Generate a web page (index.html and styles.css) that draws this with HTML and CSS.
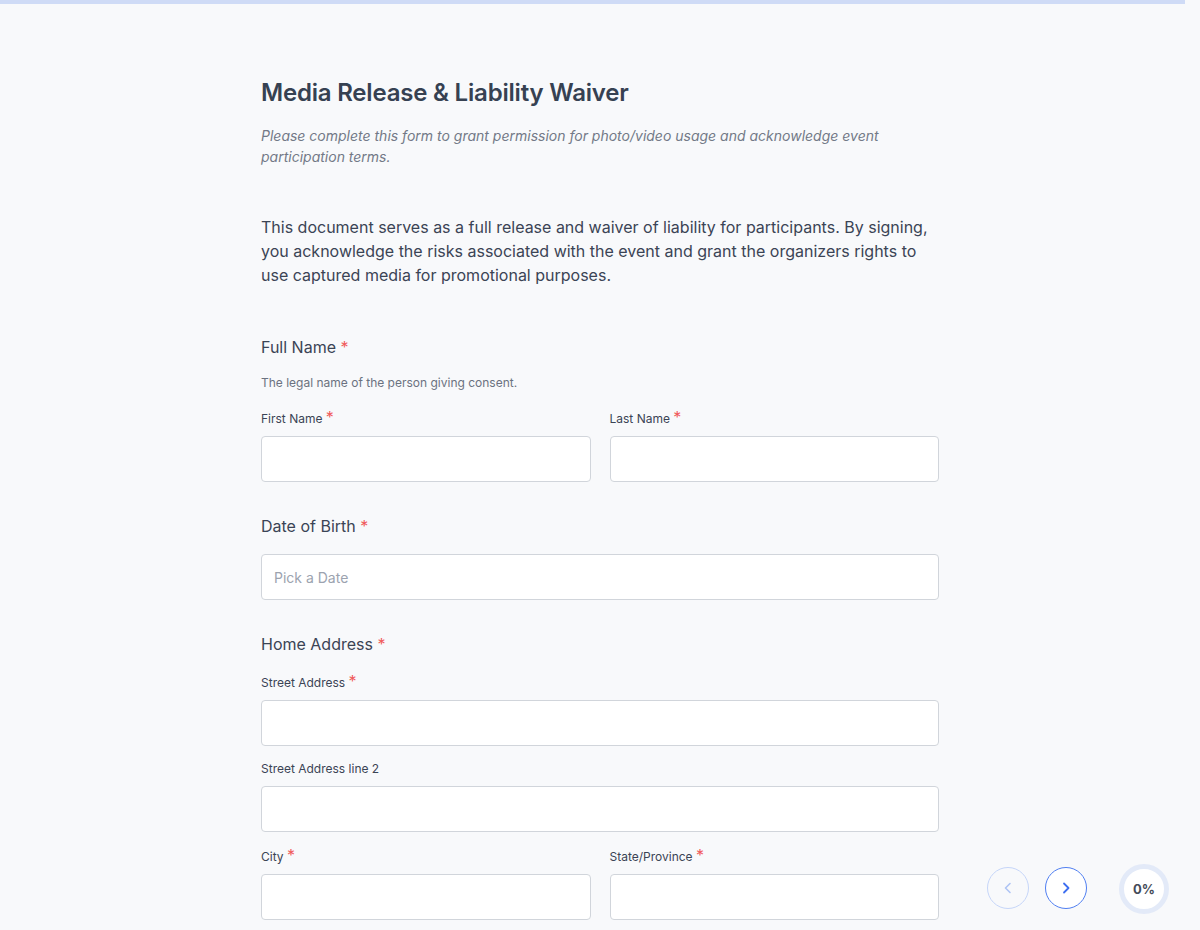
FILE: index.html
```html
<!DOCTYPE html>
<html lang="en">
<head>
  <meta charset="UTF-8">
  <title>Media Release &amp; Liability Waiver</title>
  <link rel="stylesheet" href="styles.css">
</head>
<body>
  <div class="top-progress"></div>

  <div class="form-wrap">
    <h1 class="form-title">Media Release &amp; Liability Waiver</h1>
    <p class="form-subtitle">Please complete this form to grant permission for photo/video usage and acknowledge event participation terms.</p>

    <p class="form-intro">This document serves as a full release and waiver of liability for participants. By signing, you acknowledge the risks associated with the event and grant the organizers rights to use captured media for promotional purposes.</p>

    <div class="question">
      <div class="question-label">Full Name <span class="req">*</span></div>
      <div class="question-help">The legal name of the person giving consent.</div>
      <div class="field-row">
        <div class="field">
          <label class="field-label">First Name <span class="req">*</span></label>
          <input type="text" class="text-input">
        </div>
        <div class="field">
          <label class="field-label">Last Name <span class="req">*</span></label>
          <input type="text" class="text-input">
        </div>
      </div>
    </div>

    <div class="question">
      <div class="question-label">Date of Birth <span class="req">*</span></div>
      <input type="text" class="text-input" placeholder="Pick a Date">
    </div>

    <div class="question">
      <div class="question-label">Home Address <span class="req">*</span></div>
      <div class="field">
        <label class="field-label">Street Address <span class="req">*</span></label>
        <input type="text" class="text-input">
      </div>
      <div class="field">
        <label class="field-label">Street Address line 2</label>
        <input type="text" class="text-input">
      </div>
      <div class="field-row">
        <div class="field">
          <label class="field-label">City <span class="req">*</span></label>
          <input type="text" class="text-input">
        </div>
        <div class="field">
          <label class="field-label">State/Province <span class="req">*</span></label>
          <input type="text" class="text-input">
        </div>
      </div>
    </div>
  </div>

  <div class="nav-buttons">
    <button class="nav-btn disabled" aria-label="Previous">
      <svg width="16" height="16" viewBox="0 0 16 16" fill="none" stroke="currentColor" stroke-width="1.6" stroke-linecap="round" stroke-linejoin="round"><path d="M10 3.5 5.5 8l4.5 4.5"/></svg>
    </button>
    <button class="nav-btn" aria-label="Next">
      <svg width="16" height="16" viewBox="0 0 16 16" fill="none" stroke="currentColor" stroke-width="1.8" stroke-linecap="round" stroke-linejoin="round"><path d="M6 3.5 10.5 8 6 12.5"/></svg>
    </button>
  </div>

  <div class="progress-ring">0%</div>
</body>
</html>
```

FILE: styles.css
```css
body {
  margin: 0;
  background-color: #f8f9fb;
  font-family: Inter, "Noto Sans", sans-serif;
  color: #3b4455;
}

.top-progress {
  height: 4px;
  width: 1185px;
  background-color: #cfdbf6;
}

.form-wrap {
  width: 678px;
  margin: 0 auto;
  padding: 72px 0 40px 0;
}

.form-title {
  margin: 0;
  font-size: 24px;
  font-weight: 600;
  line-height: 34px;
  color: #364152;
  letter-spacing: -0.2px;
}

.form-subtitle {
  margin: 15px 0 0 0;
  font-size: 14px;
  line-height: 21px;
  font-style: italic;
  color: #737987;
}

.form-intro {
  margin: 48px 0 0 0;
  font-size: 16px;
  line-height: 24px;
  color: #3b4455;
}

.question {
  display: flex;
  flex-direction: column;
  margin-top: 48px;
}

.question + .question {
  margin-top: 32px;
}

.question-label {
  font-size: 16px;
  line-height: 24px;
  color: #3b4455;
  margin-bottom: 16px;
}

.question-help {
  font-size: 12px;
  line-height: 16px;
  color: #6b7280;
  margin-bottom: 20px;
}

.req {
  color: #f05a5a;
}

.field-label .req {
  font-size: 16px;
  line-height: 0;
}

.field-row {
  display: flex;
  gap: 19px;
}

.field-row .field {
  flex: 1;
}

.question > .field + .field {
  margin-top: 15px;
}

.question > .field + .field-row {
  margin-top: 17px;
}

.question-label + .field {
  margin-top: 3px;
}

.field-label {
  display: block;
  font-size: 12px;
  line-height: 16px;
  color: #3b4455;
  margin-bottom: 9px;
}

.text-input {
  display: block;
  box-sizing: border-box;
  width: 100%;
  height: 46px;
  padding: 0 12px;
  border: 1px solid #d1d5db;
  border-radius: 4px;
  background-color: #fff;
  font-family: Inter, "Noto Sans", sans-serif;
  font-size: 14px;
  color: #3b4455;
}

.text-input::placeholder {
  color: #9ca3af;
}

.nav-buttons {
  position: fixed;
  left: 987px;
  top: 867px;
  display: flex;
  gap: 16px;
}

.nav-btn {
  width: 42px;
  height: 42px;
  border-radius: 50%;
  border: 1.5px solid #4f7ef0;
  background-color: #fff;
  color: #3d6ef0;
  display: flex;
  align-items: center;
  justify-content: center;
  padding: 0;
  cursor: pointer;
}

.nav-btn.disabled {
  border-color: #c5d5f8;
  color: #aec4f5;
  background-color: #f8f9fb;
}

.progress-ring {
  position: fixed;
  left: 1119px;
  top: 864px;
  width: 40px;
  height: 40px;
  border: 5px solid #e3eaf8;
  border-radius: 50%;
  background-color: #fff;
  display: flex;
  align-items: center;
  justify-content: center;
  font-size: 13px;
  font-weight: 700;
  color: #454c59;
}
```
